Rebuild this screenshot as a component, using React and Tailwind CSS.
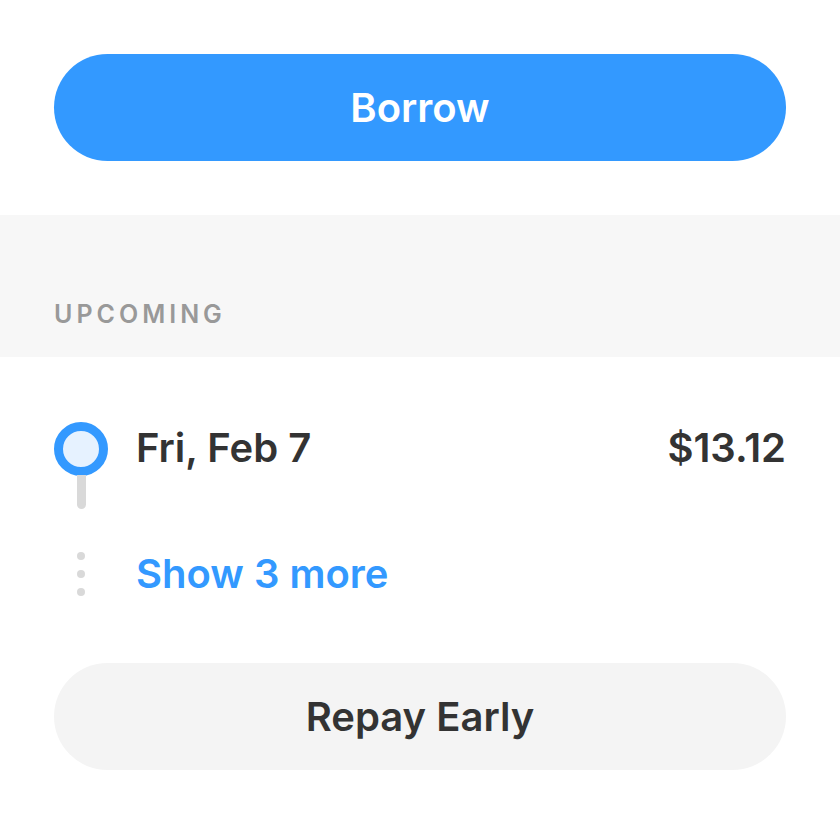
export default function App() {
  return (
    <div className="w-[840px] h-[840px] bg-white font-['Inter',sans-serif] text-[#333333]">
      <div className="px-[54px] pt-[54px]">
        <button className="w-full h-[107px] rounded-full bg-[#3399ff] text-white text-[40px] font-semibold">
          Borrow
        </button>
      </div>

      <div className="mt-[54px] h-[142px] bg-[#f7f7f7] px-[54px] flex items-end pb-[24px]">
        <span className="text-[25px] font-semibold tracking-[0.16em] text-[#999999]">UPCOMING</span>
      </div>

      <div className="px-[54px] pt-[65px]">
        <div className="flex items-start">
          <div className="w-[54px] flex flex-col items-center">
            <div className="w-[54px] h-[54px] rounded-full border-[9px] border-[#3399ff] bg-[#e6f2ff]" />
            <div className="w-[9px] h-[34px] -mt-[1px] rounded-b-full bg-[#d9d9d9]" />
          </div>
          <div className="ml-[28px] flex-1 h-[52px] flex items-center justify-between">
            <span className="text-[40px] font-semibold">Fri, Feb 7</span>
            <span className="text-[40px] font-semibold">$13.12</span>
          </div>
        </div>

        <div className="mt-[42px] h-[45px] flex items-center">
          <div className="w-[54px] flex flex-col items-center gap-[10px]">
            <div className="w-[8px] h-[8px] rounded-full bg-[#d9d9d9]" />
            <div className="w-[8px] h-[8px] rounded-full bg-[#d9d9d9]" />
            <div className="w-[8px] h-[8px] rounded-full bg-[#d9d9d9]" />
          </div>
          <span className="ml-[28px] text-[40px] font-semibold text-[#3399ff]">Show 3 more</span>
        </div>

        <button className="mt-[67px] w-full h-[107px] rounded-full bg-[#f4f4f4] text-[40px] font-semibold text-[#333333]">
          Repay Early
        </button>
      </div>
    </div>
  );
}
